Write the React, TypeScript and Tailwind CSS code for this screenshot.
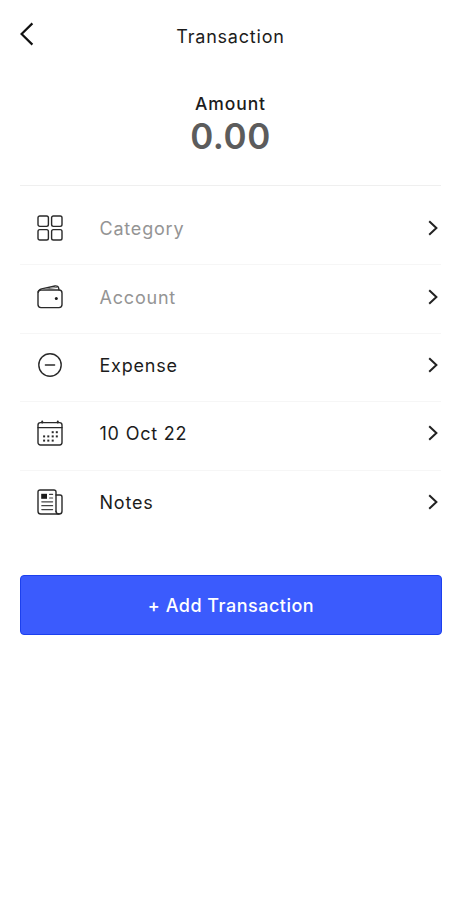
import type { ReactNode } from "react";

interface RowProps {
    icon: ReactNode;
    label: string;
    placeholder?: boolean;
    last?: boolean;
}

const iconProps = {
    width: 26,
    height: 26,
    viewBox: "0 0 26 26",
    fill: "none",
    stroke: "#2a2a2a",
    strokeWidth: 1.4,
    strokeLinecap: "round" as const,
    strokeLinejoin: "round" as const,
};

function CategoryIcon() {
    return (
        <svg {...iconProps}>
            <rect x="1" y="1" width="10.4" height="10.4" rx="1.8" />
            <rect x="14.6" y="1" width="10.4" height="10.4" rx="1.8" />
            <rect x="1" y="14.6" width="10.4" height="10.4" rx="1.8" />
            <rect x="14.6" y="14.6" width="10.4" height="10.4" rx="1.8" />
        </svg>
    );
}

function WalletIcon() {
    return (
        <svg {...iconProps}>
            <rect x="1" y="6" width="24" height="17.6" rx="3" />
            <path d="M1.2 8.2C1.6 6.2 3 5.3 4.6 4.9L18 2C20 1.6 21.4 2.6 21.8 4.6V5.8" />
            <path d="M5 5.6L20 3.4" strokeWidth="1" stroke="#777" />
            <circle cx="19.3" cy="14.6" r="1.5" fill="#1c1c1c" stroke="none" />
        </svg>
    );
}

function ExpenseIcon() {
    return (
        <svg {...iconProps}>
            <circle cx="13" cy="13" r="11.2" />
            <path d="M8.4 13H17.6" />
        </svg>
    );
}

function CalendarIcon() {
    const dots = [
        [14.7, 11.2], [18.8, 11.2],
        [6.1, 15.4], [10.3, 15.4], [14.7, 15.4], [18.8, 15.4],
        [6.1, 19.6], [10.3, 19.6], [14.7, 19.6],
    ];

    return (
        <svg {...iconProps}>
            <rect x="1" y="2.6" width="24" height="22.4" rx="2.4" />
            <path d="M1 7.6H25" />
            <path d="M5.2 1.4V2.6M20.8 1.4V2.6" strokeWidth="2" />
            {dots.map(([x, y]) => (
                <rect
                    key={`${x}-${y}`}
                    x={x}
                    y={y}
                    width="2"
                    height="2"
                    fill="#2a2a2a"
                    stroke="none"
                />
            ))}
        </svg>
    );
}

function NotesIcon() {
    return (
        <svg {...iconProps}>
            <path d="M19 22.4V3C19 1.8 18.2 1 17 1H3C1.8 1 1 1.8 1 3V22.2C1 24 2 25 3.8 25H22" />
            <path d="M19 6H23C24.2 6 25 6.8 25 8V22.2C25 24 24 25 22 25S19 24 19 22.2" />
            <rect x="4.2" y="4.8" width="5.8" height="5" fill="#1c1c1c" stroke="none" />
            <path
                d="M12.6 5.4H15.6M12.6 9H15.6M4.8 12.8H15.6M4.8 16.7H15.6M4.8 20.6H15.6"
                strokeWidth="1.2"
                stroke="#444"
            />
        </svg>
    );
}

function Row({ icon, label, placeholder, last }: RowProps) {
    return (
        <button
            className={`flex h-[68.4px] w-full items-center border-b pr-[3px] pb-[5px] pl-[17px] text-left ${
                last ? "border-transparent" : "border-[#f6f6f6]"
            }`}
        >
            {icon}
            <span
                className={`ml-[36.5px] flex-1 pt-px text-[18px] tracking-[0.8px] ${
                    placeholder ? "text-[#949494]" : "text-[#1c1c1c]"
                }`}
            >
                {label}
            </span>
            <svg width="10" height="16" viewBox="0 0 10 16" fill="none">
                <path d="M1.2 1.2L8.4 8L1.2 14.8" stroke="#222" strokeWidth="2" />
            </svg>
        </button>
    );
}

export default function App() {
    return (
        <div className="flex h-[900px] w-[461px] flex-col bg-white px-5 font-['Inter',sans-serif] text-[#1c1c1c]">
            <header className="grid h-[72px] grid-cols-[40px_1fr_40px] items-center">
                <button className="-mt-1">
                    <svg width="14" height="24" viewBox="0 0 14 24" fill="none">
                        <path d="M12.4 1.4L1.6 12L12.4 22.6" stroke="#111" strokeWidth="2.2" />
                    </svg>
                </button>
                <h1 className="pt-px text-center text-[18px] tracking-[0.8px]">Transaction</h1>
            </header>

            <div className="flex h-[114px] flex-col items-center border-b border-[#efefef] pt-[20px]">
                <p className="text-[17.5px] leading-[24px] font-medium tracking-[0.9px] text-[#1c1c1c]">
                    Amount
                </p>
                <p className="text-[35px] leading-[40px] font-semibold tracking-[0.5px] text-[#5c5c5c]">
                    0.00
                </p>
            </div>

            <div className="pt-[11px]">
                <Row icon={<CategoryIcon />} label="Category" placeholder />
                <Row icon={<WalletIcon />} label="Account" placeholder />
                <Row icon={<ExpenseIcon />} label="Expense" />
                <Row icon={<CalendarIcon />} label="10 Oct 22" />
                <Row icon={<NotesIcon />} label="Notes" last />
            </div>

            <button className="mt-[36px] h-[60px] w-[422px] rounded-[4px] border border-[#1c40ee] bg-[#3b5bfd] pt-px text-[18px] font-medium tracking-[0.5px] text-white">
                + Add Transaction
            </button>
        </div>
    );
}
